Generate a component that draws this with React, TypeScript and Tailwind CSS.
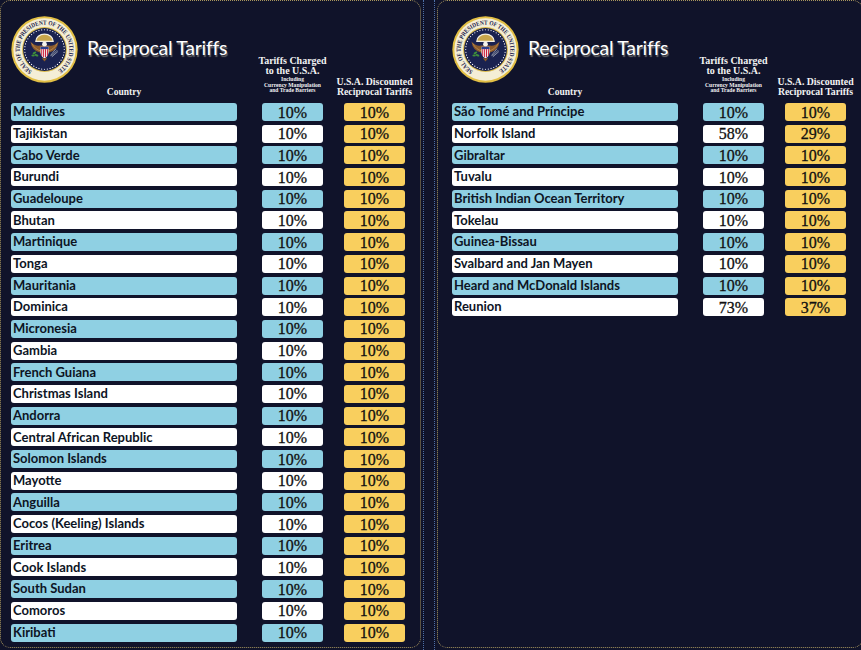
import React from "react";

type Row = { country: string; charged: string; recip: string };

const leftRows: Row[] = [
  "Maldives", "Tajikistan", "Cabo Verde", "Burundi", "Guadeloupe", "Bhutan", "Martinique",
  "Tonga", "Mauritania", "Dominica", "Micronesia", "Gambia", "French Guiana", "Christmas Island",
  "Andorra", "Central African Republic", "Solomon Islands", "Mayotte", "Anguilla",
  "Cocos (Keeling) Islands", "Eritrea", "Cook Islands", "South Sudan", "Comoros", "Kiribati",
].map((country) => ({ country, charged: "10%", recip: "10%" }));

const rightRows: Row[] = [
  { country: "São Tomé and Príncipe", charged: "10%", recip: "10%" },
  { country: "Norfolk Island", charged: "58%", recip: "29%" },
  { country: "Gibraltar", charged: "10%", recip: "10%" },
  { country: "Tuvalu", charged: "10%", recip: "10%" },
  { country: "British Indian Ocean Territory", charged: "10%", recip: "10%" },
  { country: "Tokelau", charged: "10%", recip: "10%" },
  { country: "Guinea-Bissau", charged: "10%", recip: "10%" },
  { country: "Svalbard and Jan Mayen", charged: "10%", recip: "10%" },
  { country: "Heard and McDonald Islands", charged: "10%", recip: "10%" },
  { country: "Reunion", charged: "73%", recip: "37%" },
];

// Presidential seal, simplified
function Seal({ id }: { id: string }) {
  const dots = Array.from({ length: 44 }, (_, i) => {
    const a = (i / 44) * Math.PI * 2;
    return { x: 50 + 29.5 * Math.sin(a), y: 50 - 29.5 * Math.cos(a) };
  });
  return (
    <svg viewBox="0 0 100 100" className="h-[67px] w-[67px] shrink-0">
      <defs>
        <path id={id} d="M31.5 82 A37 37 0 1 1 68.5 82" />
      </defs>
      <circle cx="50" cy="50" r="49.5" fill="#e2bf45" />
      <circle cx="50" cy="50" r="46.5" fill="#f4eed6" />
      <text
        fill="#1d2450"
        fontSize="9.5"
        fontWeight="bold"
        fontFamily="'Liberation Serif', serif"
      >
        <textPath href={`#${id}`} textLength="196" lengthAdjust="spacingAndGlyphs">
          SEAL OF THE PRESIDENT OF THE UNITED STATES
        </textPath>
      </text>
      <circle cx="50" cy="50" r="33.5" fill="#d9b94a" />
      <circle cx="50" cy="50" r="32" fill="#1a2250" />
      {dots.map((d, i) => (
        <circle key={i} cx={d.x} cy={d.y} r="0.9" fill="#ffffff" />
      ))}
      {/* glory */}
      <path d="M37 38 A13 11 0 0 1 63 38 Z" fill="#c9a64b" stroke="#f3efe3" strokeWidth="1.8" />
      {/* wings */}
      <path
        d="M29 38 Q31 52 44 55 L56 55 Q69 52 71 38 Q63 46 57 44 L43 44 Q37 46 29 38 Z"
        fill="#8b5a2b"
      />
      <path d="M31 41 Q36 50 44 52 M69 41 Q64 50 56 52" stroke="#c99a5a" strokeWidth="1" fill="none" />
      {/* head */}
      <circle cx="50" cy="42" r="3.6" fill="#f6f4ee" />
      {/* shield */}
      <path d="M44 46 H56 V54 Q56 60 50 63 Q44 60 44 54 Z" fill="#f5f5f5" />
      <rect x="44" y="46" width="12" height="3.5" fill="#2c3f8f" />
      <rect x="45.2" y="49.5" width="1.4" height="10" fill="#c8102e" />
      <rect x="48" y="49.5" width="1.4" height="12" fill="#c8102e" />
      <rect x="50.8" y="49.5" width="1.4" height="12" fill="#c8102e" />
      <rect x="53.6" y="49.5" width="1.4" height="10" fill="#c8102e" />
      {/* olive branch */}
      <ellipse cx="35" cy="55" rx="3" ry="1.6" fill="#3f8f3a" transform="rotate(-30 35 55)" />
      <ellipse cx="38" cy="58.5" rx="3" ry="1.6" fill="#3f8f3a" transform="rotate(20 38 58.5)" />
      <ellipse cx="33" cy="59" rx="2.6" ry="1.4" fill="#3f8f3a" />
      {/* arrows */}
      <path d="M60 60 L69 51 M61 61 L70 53 M59 59 L67 49" stroke="#bfc4cc" strokeWidth="1" />
      {/* tail */}
      <path d="M46 63 L50 68 L54 63 Z" fill="#8b5a2b" />
    </svg>
  );
}

function Panel({ rows, sealId, className }: { rows: Row[]; sealId: string; className: string }) {
  return (
    <div
      className={`h-[648px] shrink-0 rounded-[10px] border border-dotted border-[#a8965e] pt-[14px] ${className}`}
    >
      {/* header */}
      <div className="flex h-[82px] items-end text-[#f2f2f2] [font-family:'Liberation_Serif',serif] font-bold">
        <div className="flex w-[226px] flex-col">
          <div className="flex items-center">
            <Seal id={sealId} />
            <span className="ml-[9px] mt-[-3px] text-[19.5px] font-normal tracking-[-0.015em] text-white [font-family:Lato,sans-serif] [text-shadow:1px_1.5px_1px_#6b6b6b]">
              Reciprocal Tariffs
            </span>
          </div>
          <div className="mt-[4px] text-center text-[9.5px] leading-[10px]">Country</div>
        </div>
        <div className="ml-[25px] flex w-[61px] flex-col items-center whitespace-nowrap">
          <div className="text-[10px] leading-[10px]">Tariffs Charged</div>
          <div className="text-[10px] leading-[10px]">to the U.S.A.</div>
          <div className="mt-[1px] text-[5.6px] leading-[5.7px]">Including</div>
          <div className="text-[5.6px] leading-[5.7px]">Currency Manipulation</div>
          <div className="mb-[3px] text-[5.6px] leading-[5.7px]">and Trade Barriers</div>
        </div>
        <div className="ml-[21px] flex w-[61px] flex-col items-center whitespace-nowrap">
          <div className="text-[9.8px] leading-[10px]">U.S.A. Discounted</div>
          <div className="text-[9.8px] leading-[10px]">Reciprocal Tariffs</div>
        </div>
      </div>

      {/* rows */}
      <div className="mt-[6px] flex flex-col gap-[3.7px]">
        {rows.map((r, i) => {
          const bg = i % 2 === 0 ? "bg-[#8fd0e3]" : "bg-white";
          return (
            <div key={r.country} className="flex h-[18px]">
              <div
                className={`flex w-[226px] items-center rounded-[3px] pl-[2px] text-[13px] font-bold text-[#0d1424] [font-family:Lato,sans-serif] ${bg}`}
              >
                {r.country}
              </div>
              <div
                className={`ml-[25px] flex w-[61px] items-center justify-center rounded-[3px] pt-[1px] text-[16px] text-[#111111] [font-family:'Liberation_Serif',serif] [-webkit-text-stroke:0.3px_#111111] ${bg}`}
              >
                {r.charged}
              </div>
              <div className="ml-[21px] flex w-[61px] items-center justify-center rounded-[3px] bg-[#f9cf5e] pt-[1px] text-[16px] text-[#111111] [font-family:'Liberation_Serif',serif] [-webkit-text-stroke:0.3px_#111111]">
                {r.recip}
              </div>
            </div>
          );
        })}
      </div>
    </div>
  );
}

export default function App() {
  return (
    <div className="flex h-[650px] w-[861px] overflow-hidden bg-[#10132a]">
      <Panel rows={leftRows} sealId="seal-left" className="w-[421px] pl-[10px]" />
      <div className="flex h-[650px] w-[16px] shrink-0 justify-between px-[2px]">
        <div className="h-full border-l border-dotted border-[#4d6fa6]" />
        <div className="h-full border-l border-dotted border-[#4d6fa6]" />
      </div>
      <Panel rows={rightRows} sealId="seal-right" className="w-[426px] pl-[14px]" />
    </div>
  );
}
